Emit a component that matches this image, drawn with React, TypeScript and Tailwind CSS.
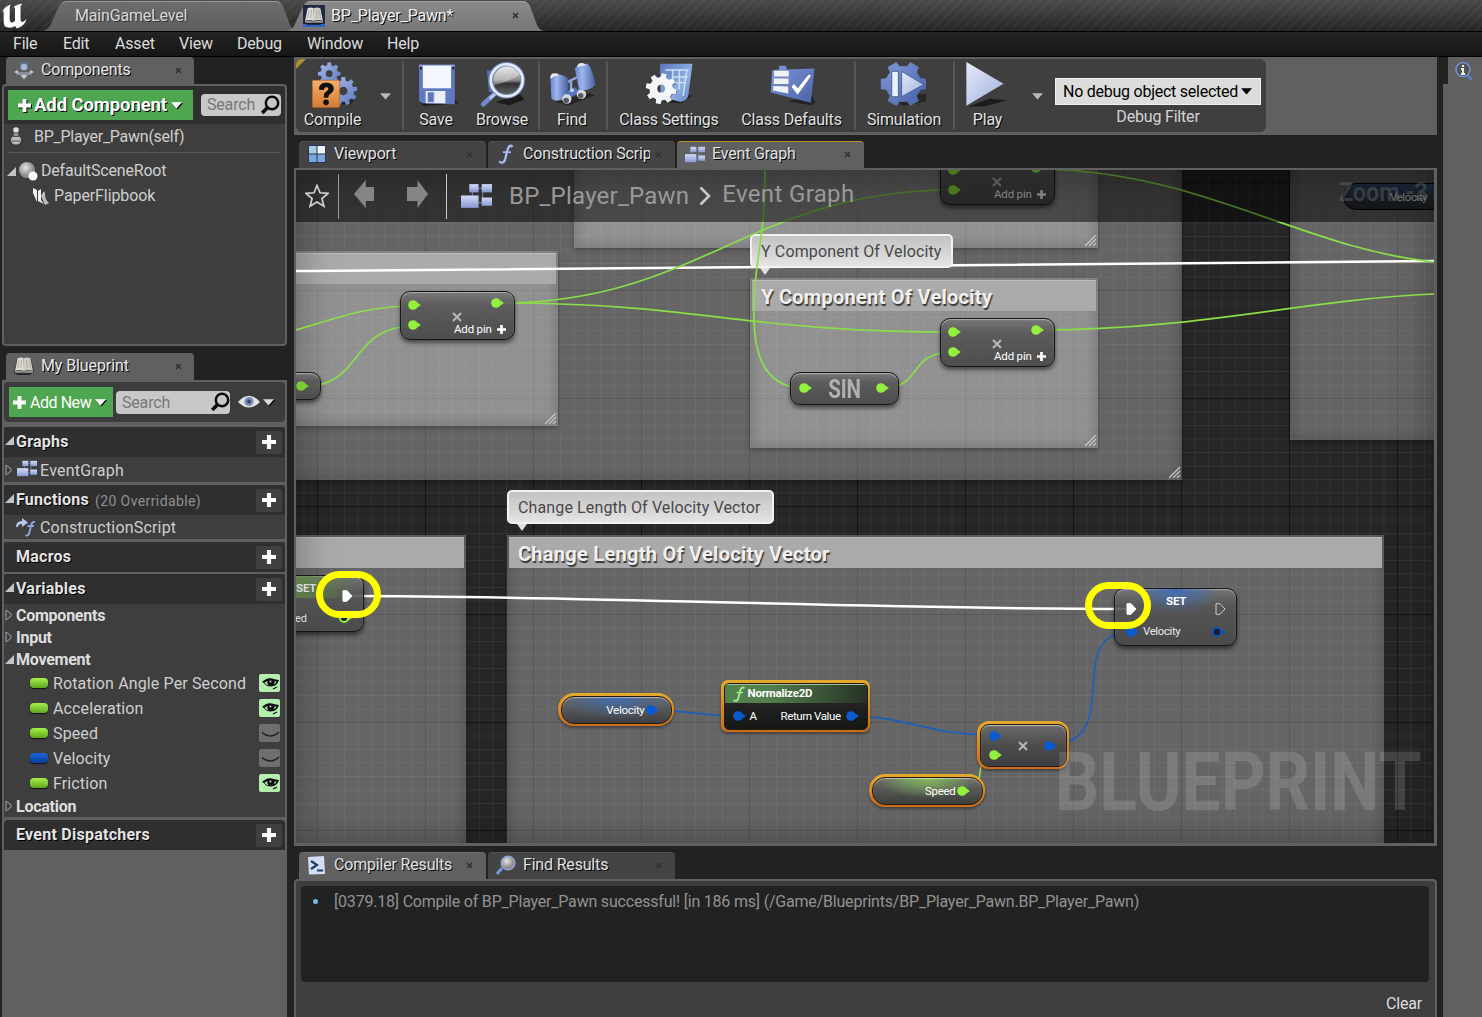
import type { ReactNode } from "react";

const shadow = "[text-shadow:1px_1px_0_#000]";

/* ---------- small shared glyphs ---------- */

function CloseX({ className = "" }: { className?: string }) {
  return (
    <svg width="7" height="7" viewBox="0 0 7 7" className={className}>
      <path d="M1 1L6 6M6 1L1 6" stroke="#333" strokeWidth="1.7" />
    </svg>
  );
}

function Plus({ size = 13, color = "#fff" }: { size?: number; color?: string }) {
  return (
    <svg width={size} height={size} viewBox="0 0 13 13" className="shrink-0">
      <path d="M4.6 0h3.8v4.6H13v3.8H8.4V13H4.6V8.4H0V4.6h4.6z" fill={color} />
    </svg>
  );
}

function Caret({ color = "#fff", className = "" }: { color?: string; className?: string }) {
  return (
    <svg width="11" height="7" viewBox="0 0 11 7" className={`shrink-0 ${className}`}>
      <path d="M0 .3h11L5.5 6.6z" fill={color} />
    </svg>
  );
}

function Magnifier({ size = 20 }: { size?: number }) {
  return (
    <svg width={size} height={size} viewBox="0 0 20 20" fill="none" className="shrink-0">
      <circle cx="12" cy="8" r="6.2" stroke="#0a0a0a" strokeWidth="2.5" />
      <path d="M7.4 12.8L2.2 18" stroke="#0a0a0a" strokeWidth="3.6" />
    </svg>
  );
}

function OpenTri() {
  return (
    <svg width="9" height="9" viewBox="0 0 9 9" className="shrink-0">
      <path d="M9 0v9H0z" fill="#c4c4c4" />
    </svg>
  );
}

function ClosedTri() {
  return (
    <svg width="7" height="12" viewBox="0 0 7 12" fill="none" className="shrink-0">
      <path d="M1 1v10L6 7.2V4.8z" stroke="#a4a4a4" />
    </svg>
  );
}

function GraphIcon({ w = 20, h = 17 }: { w?: number; h?: number }) {
  return (
    <svg width={w} height={h} viewBox="0 0 30 25" className="shrink-0">
      <defs>
        <linearGradient id="gi" x1="0" y1="0" x2="0" y2="1">
          <stop offset="0" stopColor="#d3dcf8" />
          <stop offset="1" stopColor="#8798d2" />
        </linearGradient>
      </defs>
      <path d="M11 14V5h10v14H14" stroke="#7686b5" fill="none" />
      <rect x="8" y="1" width="9" height="8" fill="url(#gi)" />
      <rect x="20" y="1" width="10" height="8" fill="url(#gi)" />
      <rect x="0" y="12" width="17" height="12" fill="url(#gi)" />
      <rect x="20" y="14" width="10" height="8" fill="url(#gi)" />
    </svg>
  );
}

function BookIcon({ boxed = false }: { boxed?: boolean }) {
  return (
    <svg width="22" height="22" viewBox="0 0 22 22" className="shrink-0">
      {boxed && <rect width="22" height="22" fill="#1e2a44" />}
      {boxed && <rect y="19" width="22" height="3" fill="#2f66c4" />}
      <path d="M1 18L4 4h14l3 13-4 3H5z" fill="#111" opacity=".7" />
      <path d="M2 16L4.5 3.5Q8 1.5 10.7 3.3L11 16Q6 14 2 16z" fill="#e0ddd6" />
      <path d="M20 16L17.5 3.5Q14 1.5 10.9 3.3L11 16Q16 14 20 16z" fill="#cfccc5" />
      <path d="M6 5.5L4.5 13M8.5 5L7.7 13M13.5 5l.8 8M16 5.5l1.5 7.5" stroke="#b0ada6" />
      <path d="M2 16.3Q6 14.5 11 16.5 16 14.5 20 16.3v1.5H2z" fill="#9c9a94" />
    </svg>
  );
}

function FnIcon({ size = 20, color = "#a8b9f0" }: { size?: number; color?: string }) {
  return (
    <svg width={size} height={size} viewBox="0 0 20 20" fill="none" className="shrink-0">
      <path d="M16.5 3Q15 .6 13 2.6 11.8 4 11 8L9.2 15Q8.2 18.8 5.6 18.6 4 18.5 3.5 17.3" stroke={color} strokeWidth="2.4" />
      <path d="M7 8.2h8" stroke={color} strokeWidth="1.8" />
    </svg>
  );
}

/* ---------- title bar ---------- */

function UnrealLogo() {
  return (
    <svg width="28" height="28" viewBox="0 0 28 28" className="mt-0.5">
      <path
        d="M1 12Q4 4 11 2.5 9.5 4 9.7 6.500V18q.5 3 2.600 2.500 1.600-.4 2.700-1.700V6.500Q14.800 5 13.300 5.200 17 2 22.500 1.500 20.500 3.500 20.500 5.500V17.500q.2 2.600 2 2.400 2.200-.5 4.200-3.400Q25 24 16.800 26.500L15 24Q11.500 26.800 6 25 3.500 24 3.700 19V11q0-2.300-1-1.800Q1.700 9.900 1 12z"
        fill="#fff"
      />
    </svg>
  );
}

function TitleTab({ className, fill, children }: { className: string; fill: string; children: ReactNode }) {
  return (
    <div className={`relative flex h-[31px] shrink-0 items-center ${className}`}>
      <svg className="absolute inset-0 h-full w-full" viewBox="0 0 256 31" preserveAspectRatio="none">
        <defs>
          <linearGradient id={fill} x1="0" y1="0" x2="0" y2="1">
            <stop offset="0" stopColor={fill === "tabOn" ? "#8a8a8a" : "#6d6d6d"} />
            <stop offset="1" stopColor={fill === "tabOn" ? "#777" : "#5e5e5e"} />
          </linearGradient>
        </defs>
        <path d="M0 31Q6 29 8 24L16 6Q19 1 24 1H234Q240 1 242 6L249 25Q251 30 256 31z" fill={`url(#${fill})`} />
        <path d="M20 2.500Q22 1.500 24 1.500H234Q237 1.500 239 3" fill="none" stroke="#a5a5a5" strokeWidth=".8" />
      </svg>
      <div className="relative flex h-full w-full items-center">{children}</div>
    </div>
  );
}

function TitleBar() {
  return (
    <header className="flex h-[31px] bg-[repeating-linear-gradient(135deg,rgba(255,255,255,0.03)_0_2px,transparent_2px_7px),linear-gradient(to_bottom,#4a4a4a,#262626)]">
      <div className="w-[43px]">
        <UnrealLogo />
      </div>
      <TitleTab className="w-[254px]" fill="tabOff">
        <span className="ml-8 text-base text-[#d8d8d8] [text-shadow:1px_1px_0_#333]">MainGameLevel</span>
      </TitleTab>
      <TitleTab className="-ml-2.5 w-[257px]" fill="tabOn">
        <span className="ml-4">
          <BookIcon boxed />
        </span>
        <span className={`ml-1.5 text-base text-[#f2f2f2] ${shadow}`}>BP_Player_Pawn*</span>
        <CloseX className="mr-[25px] ml-auto" />
      </TitleTab>
    </header>
  );
}

function MenuBar() {
  return (
    <nav className="flex h-[26px] items-center border-y border-black bg-gradient-to-b from-[#242424] to-[#161616] pl-[13px] text-base text-[#dcdcdc]">
      <span className="w-[50px]">File</span>
      <span className="w-[52px]">Edit</span>
      <span className="w-16">Asset</span>
      <span className="w-[58px]">View</span>
      <span className="w-[70px]">Debug</span>
      <span className="w-20">Window</span>
      <span>Help</span>
    </nav>
  );
}

/* ---------- left panels ---------- */

function ComponentsPanel() {
  return (
    <section className="flex h-[289px] flex-col">
      <div className="ml-1 flex h-[27px] w-[188px] items-center rounded-t-sm bg-[#606060] pb-px pl-2">
        <svg width="20" height="20" viewBox="0 0 20 20">
          <path d="M10 20L6 15H2l2-3h12l2 3h-4z" fill="#8a8f9a" />
          <rect x="6" y="2" width="8" height="8" fill="#5a6f96" />
          <circle cx="10" cy="7" r="3.300" fill="#a9b7d6" />
          <path d="M0 12l4-2v4zM20 12l-4-2v4zM10 19l-3-4h6z" fill="#c5cad4" />
        </svg>
        <span className={`ml-[7px] text-base text-[#e8e8e8] ${shadow}`}>Components</span>
        <CloseX className="mr-3 ml-auto" />
      </div>
      <div className="flex flex-1 flex-col rounded-sm border-2 border-[#606060] bg-[#3e3e3e]">
        <div className="flex h-[38px] items-center rounded-t bg-[#2f2f2f] pr-1 pl-1">
          <div className="flex h-[30px] w-[185px] items-center bg-[#4fa650] pl-2.5">
            <span className="drop-shadow-[1px_1px_0_#000]">
              <Plus size={13} />
            </span>
            <span className={`ml-[3px] pt-0.5 text-[18.500px] font-bold tracking-[-0.1px] text-white ${shadow}`}>Add Component</span>
            <Caret className="ml-1 drop-shadow-[1px_1px_0_#000]" />
          </div>
          <div className="ml-auto flex h-[22px] w-[80px] items-center justify-between rounded-sm bg-[#c8c8c8] pr-px pl-1.5">
            <span className="text-base text-[#777]">Search</span>
            <Magnifier />
          </div>
        </div>
        <div className="mx-1 flex h-[29px] items-center border-b border-[#585858] pl-0.5 text-base text-[#cfcfcf]">
          <svg width="12" height="18" viewBox="0 0 12 18" className="-mt-1">
            <circle cx="6" cy="3" r="2.800" fill="#ddd" />
            <circle cx="6" cy="7.500" r="2.500" fill="#888" />
            <ellipse cx="6" cy="13" rx="5" ry="4.500" fill="#bbb" />
            <path d="M2 9.500h8M2 14h8" stroke="#555" />
          </svg>
          <span className="-mt-0.5 ml-[12px] tracking-[-0.26px]">BP_Player_Pawn(self)</span>
        </div>
        <div className="mt-[6px] flex h-6 items-center pl-[3px] text-base text-[#cfcfcf]">
          <OpenTri />
          <svg width="20" height="20" viewBox="0 0 20 20" className="ml-0.5">
            <defs>
              <radialGradient id="ball" cx=".4" cy=".35">
                <stop offset="0" stopColor="#e6e6e6" />
                <stop offset="1" stopColor="#8c8c8c" />
              </radialGradient>
            </defs>
            <circle cx="9" cy="9" r="8" fill="url(#ball)" />
            <circle cx="15" cy="15" r="4.500" fill="#fff" />
          </svg>
          <span className="ml-[3px]">DefaultSceneRoot</span>
        </div>
        <div className="flex h-[26px] items-center pl-7 text-base text-[#cfcfcf]">
          <svg width="17" height="18" viewBox="0 0 17 18">
            <path d="M1 1l4 2v12L1 6zM6 4l3-2v11l3 4-6-3z" fill="#f2f2f2" />
            <path d="M9 9q4-8 4-2t4 9l-4 2z" fill="#bdbdbd" />
          </svg>
          <span className="ml-[5px] tracking-[-0.1px]">PaperFlipbook</span>
        </div>
      </div>
    </section>
  );
}

function SectionHeader({ title, note, arrow = true }: { title: string; note?: string; arrow?: boolean }) {
  return (
    <div className="flex h-[30px] items-center rounded-t bg-[#2f2f2f] pr-[3px] pl-px">
      <span className="w-[11px] pb-1">{arrow && <OpenTri />}</span>
      <span className={`text-base font-bold tracking-[0.25px] text-[#e4e4e4] ${shadow}`}>{title}</span>
      {note && <span className="ml-1.5 pt-0.5 text-sm tracking-[0.4px] text-[#8f8f8f]">{note}</span>}
      <span className="ml-auto flex h-[23px] w-[26px] items-center justify-center rounded-xs bg-[#404040] pr-px">
        <Plus size={14} />
      </span>
    </div>
  );
}

function Category({ name, open = false }: { name: string; open?: boolean }) {
  return (
    <div className="flex h-[22px] items-center pl-px text-base font-bold tracking-[-0.25px] text-[#dedede]">
      <span className="flex w-[11px] items-center">{open ? <OpenTri /> : <ClosedTri />}</span>
      <span className="pt-px">{name}</span>
    </div>
  );
}

function Variable({ name, blue = false, shown = false }: { name: string; blue?: boolean; shown?: boolean }) {
  return (
    <div className="flex h-[25px] items-center pt-px pr-[5px] pl-[26px]">
      <span
        className={
          blue
            ? "h-2.5 w-[18px] rounded-[4px] bg-gradient-to-b from-[#1a63d8] to-[#0a3f9c] shadow-[0_1px_1px_#111]"
            : "h-2.5 w-[18px] rounded-[4px] bg-gradient-to-b from-[#a6f04a] to-[#5fa81e] shadow-[0_1px_1px_#111]"
        }
      />
      <span className="ml-[5px] pt-0.5 text-base tracking-[0.13px] text-[#cfcfcf]">{name}</span>
      {shown ? (
        <svg width="21" height="18" viewBox="0 0 21 18" className="ml-auto rounded-xs bg-[#b5efb0]">
          <path d="M3 8Q8 3 13 4.500 17 5.500 20 6 18 12 12 12.500 7 12.500 5 9z" fill="#0a0a0a" />
          <path d="M5.500 8.800Q8 11.500 9.500 11.300 7.500 9 8.500 7.200 7 7.500 5.500 8.800zM15.500 7.500q.5 1.500-1 3 2.500-1 3-3z" fill="#b5efb0" />
          <circle cx="11.500" cy="7.500" r="1" fill="#b5efb0" />
          <path d="M14 15l4-2" stroke="#0a0a0a" strokeWidth="1.200" />
        </svg>
      ) : (
        <svg width="21" height="18" viewBox="0 0 21 18" fill="none" className="ml-auto rounded-xs bg-[#6f6f6f]">
          <path d="M3 8.500Q6 11.500 11 12 16 12 20 8" stroke="#222" strokeWidth="1.700" />
        </svg>
      )}
    </div>
  );
}

function MyBlueprintPanel() {
  return (
    <section className="mt-[7px] flex flex-1 flex-col">
      <div className="ml-1 flex h-[27px] w-[188px] items-center rounded-t-sm bg-[#606060] pb-px pl-[7px]">
        <BookIcon />
        <span className={`ml-1.5 text-base tracking-[-0.1px] text-[#e8e8e8] ${shadow}`}>My Blueprint</span>
        <CloseX className="mr-3 ml-auto" />
      </div>
      <div className="flex flex-1 flex-col border-x-2 border-t-2 border-[#606060] bg-[#606060]">
        <div className="flex h-10 items-center rounded bg-[#3c3c3c] pl-[5px]">
          <div className="flex h-[30px] w-[104px] items-center bg-[#4fa650] pl-1">
            <Plus size={13} />
            <span className="ml-1 pt-px text-base tracking-[-0.45px] text-white">Add New</span>
            <Caret className="ml-1 drop-shadow-[1px_1px_0_#000]" />
          </div>
          <div className="ml-[3px] flex h-[23px] w-[114px] items-center justify-between rounded-sm bg-[#c8c8c8] pl-1.5">
            <span className="pt-px text-base text-[#777]">Search</span>
            <Magnifier />
          </div>
          <svg width="22" height="14" viewBox="0 0 22 14" className="ml-2">
            <path d="M0 7Q11-5.500 22 7 11 18 0 7z" fill="#e3e3e6" />
            <circle cx="11" cy="6.500" r="4.500" fill="#7b8db5" />
            <circle cx="11" cy="6.500" r="2" fill="#39466a" />
          </svg>
          <Caret className="ml-[3px] drop-shadow-[1px_1px_0_#000]" color="#dcdcdc" />
        </div>
        <div className="mt-[5px] bg-[#3e3e3e]">
          <SectionHeader title="Graphs" />
          <div className="flex h-[25px] items-center pl-px text-base tracking-[0.25px] text-[#cfcfcf]">
            <ClosedTri />
            <span className="mr-[3px] ml-[5px] pb-0.5">
              <GraphIcon />
            </span>
            <span className="pt-0.5">EventGraph</span>
          </div>
        </div>
        <div className="mt-[3px] bg-[#3e3e3e]">
          <SectionHeader title="Functions" note="(20 Overridable)" />
          <div className="flex h-6 items-center pl-3 text-base tracking-[0.18px] text-[#cfcfcf]">
            <svg width="20" height="20" viewBox="0 0 20 20" fill="none" className="mr-1">
              <path d="M0 10Q0 4 6 4V1l6 4.500L6 10V7Q2 7 2 10z" fill="#b7c6ee" />
              <path d="M19 5q-3-1-4 4l-1.500 6Q12.800 19 9.500 18.500M11.500 9H18" stroke="#8ea6e4" strokeWidth="1.800" />
            </svg>
            <span className="pt-0.5">ConstructionScript</span>
          </div>
        </div>
        <div className="mt-[3px] bg-[#3e3e3e]">
          <SectionHeader title="Macros" arrow={false} />
        </div>
        <div className="mt-[2px] bg-[#3e3e3e]">
          <SectionHeader title="Variables" />
          <Category name="Components" />
          <Category name="Input" />
          <Category name="Movement" open />
          <Variable name="Rotation Angle Per Second" shown />
          <Variable name="Acceleration" shown />
          <Variable name="Speed" />
          <Variable name="Velocity" blue />
          <Variable name="Friction" shown />
          <Category name="Location" />
        </div>
        <div className="mt-[3px]">
          <SectionHeader title="Event Dispatchers" arrow={false} />
        </div>
      </div>
    </section>
  );
}

/* ---------- toolbar ---------- */

function gearPath(cx: number, cy: number, r: number, teeth: number, turn = 0, hole = 0.3) {
  let d = "";
  for (let i = 0; i < teeth; i++) {
    const a = (i / teeth) * Math.PI * 2 + turn;
    const s = Math.PI / teeth;
    [
      [a - s * 0.62, r * 0.76],
      [a - s * 0.4, r],
      [a + s * 0.4, r],
      [a + s * 0.62, r * 0.76],
    ].forEach(([t, q], k) => {
      d += `${i === 0 && k === 0 ? "M" : "L"}${(cx + Math.sin(t) * q).toFixed(1)} ${(cy - Math.cos(t) * q).toFixed(1)}`;
    });
  }
  const h = r * hole;
  return hole === 0 ? `${d}z` : `${d}zM${cx - h} ${cy}a${h} ${h} 0 1 0 ${h * 2} 0a${h} ${h} 0 1 0 ${-h * 2} 0z`;
}

function Defs() {
  return (
    <svg width="0" height="0" className="absolute">
      <defs>
        <linearGradient id="blue" x1="0" y1="0" x2="1" y2="1">
          <stop offset="0" stopColor="#a9bbe9" />
          <stop offset="1" stopColor="#5c78bd" />
        </linearGradient>
        <linearGradient id="deep" x1="0" y1="0" x2="1" y2="1">
          <stop offset="0" stopColor="#7f97d6" />
          <stop offset="1" stopColor="#4963a8" />
        </linearGradient>
        <linearGradient id="sheet" x1="0" y1="0" x2="1" y2="1">
          <stop offset="0" stopColor="#5a79bd" />
          <stop offset=".6" stopColor="#8fb1e4" />
          <stop offset="1" stopColor="#5f7fc4" />
        </linearGradient>
        <linearGradient id="barrel" x1="0" y1="0" x2="1" y2="0">
          <stop offset="0" stopColor="#6484cd" />
          <stop offset=".35" stopColor="#9fb6ec" />
          <stop offset="1" stopColor="#4460a4" />
        </linearGradient>
        <linearGradient id="pale" x1="0" y1="0" x2="1" y2="1">
          <stop offset="0" stopColor="#e6ebfb" />
          <stop offset="1" stopColor="#9fb0dc" />
        </linearGradient>
        <linearGradient id="lens" x1="0" y1="0" x2="0" y2="1">
          <stop offset="0" stopColor="#e8e8e8" />
          <stop offset=".5" stopColor="#8a8a8a" />
          <stop offset=".6" stopColor="#333" />
          <stop offset="1" stopColor="#666" />
        </linearGradient>
        <linearGradient id="orange" x1="0" y1="0" x2="0" y2="1">
          <stop offset="0" stopColor="#f6ae6c" />
          <stop offset="1" stopColor="#d37b33" />
        </linearGradient>
      </defs>
    </svg>
  );
}

function Icon48({ children }: { children: ReactNode }) {
  return (
    <svg width="50" height="50" viewBox="0 0 50 50" fill="none">
      {children}
    </svg>
  );
}

const CompileIcon = () => (
  <Icon48>
    <path d="M30 44l18-3-4 5H32z" fill="#111" opacity=".6" />
    <path d={gearPath(21, 13.500, 12, 8)} fill="url(#blue)" fillRule="evenodd" />
    <path d={gearPath(36, 32, 15, 9)} fill="url(#blue)" fillRule="evenodd" />
    <rect x="3" y="20.500" width="29" height="29" rx="1" fill="url(#orange)" stroke="#a85f22" strokeWidth=".6" />
    <path d="M10.500 30Q10.500 23.500 17.800 23.500 25.300 23.500 25.300 29.500 25.300 33 21.500 35 19.600 36 19.600 38.500h-4Q15.200 34.500 18 32.800 20.600 31.300 20.600 29.600 20.600 27.300 18 27.300 15.300 27.300 15 30.400z" fill="#111" stroke="#111" />
    <circle cx="17.600" cy="44" r="3" fill="#111" />
  </Icon48>
);

const SaveIcon = () => (
  <Icon48>
    <path d="M8 44L44 40 49 45 12 48z" fill="#0d0d0d" opacity=".65" />
    <path d="M7 4h38v42l-35-1-3-3z" fill="#5f7ac2" />
    <path d="M7 4h38v2H7z" fill="#93a8e0" />
    <rect x="11" y="5" width="30" height="24" fill="#f3f6fc" />
    <rect x="8" y="6" width="2" height="3" fill="#223" />
    <rect x="42.500" y="6" width="2" height="3" fill="#223" />
    <path d="M14 32h21v13H14z" fill="#e9eefa" />
    <path d="M16 33h7v11h-7z" fill="#5a75be" stroke="#ccd" />
  </Icon48>
);

const BrowseIcon = () => (
  <Icon48>
    <path d="M9 10h36v23H11z" fill="#5570b5" />
    <path d="M18 44l26-9 5 6-16 6z" fill="#0d0d0d" opacity=".7" />
    <path d="M18 34L5 46" stroke="#6f89cd" strokeWidth="5" strokeLinecap="round" />
    <path d="M20 33l-8 7" stroke="#b8c6ee" strokeWidth="3" />
    <circle cx="30" cy="20.500" r="17" fill="url(#lens)" stroke="#6f86c0" strokeWidth="5" />
    <circle cx="30" cy="20.500" r="17" stroke="#e6ecfb" strokeWidth="2.800" />
    <path d="M15.500 26Q27 24 44.500 15 42 6 31 5 16 6 15.500 26z" fill="#fff" opacity=".35" />
  </Icon48>
);

const FindIcon = () => (
  <Icon48>
    <path d="M8 43l36-9 5 3-28 10z" fill="#0d0d0d" opacity=".55" />
    <path d="M18 33l10-5 6 5-14 8z" fill="#5876bd" />
    <path d="M19 23l12-6M24 20v12" stroke="#8fa6dd" strokeWidth="2.600" />
    <path d="M2 18Q8 13 14 15l5 2q2 1 2 4v16q-5 5-12 5-5 0-6-3z" fill="url(#barrel)" />
    <path d="M28 8l4-4 10-1q5 7 8 22-4 5-11 6-6 0-7-3z" fill="url(#barrel)" />
    <path d="M2 19q-1-6 5-6 4 0 4 2.500-4 0-9 3.500z" fill="#ececee" />
    <path d="M30.500 7q0-5 4.500-5 4 0 4.500 2.500Q34 4.500 30.500 7z" fill="#ececee" />
    <path d="M17 35l6 1-2 4-5 1zM32 29l6 1-1 5-5 1z" fill="#7c97da" />
    <circle cx="19.500" cy="40.500" r="5" fill="#d6d7db" />
    <circle cx="18.800" cy="42" r="3" fill="#565b66" />
    <circle cx="35" cy="35.500" r="5" fill="#d6d7db" />
    <circle cx="34.300" cy="37" r="3" fill="#565b66" />
    <circle cx="25" cy="31" r="2" fill="#c3d0f2" />
  </Icon48>
);

const SettingsIcon = () => (
  <Icon48>
    <path d="M20 44l24-8 6 1-11 8z" fill="#0d0d0d" opacity=".6" />
    <path d="M15.500 3H50l-4.500 34q-1 5-8 6.500L16 38z" fill="url(#sheet)" />
    <path d="M21 9.500h25M28 17h17M30 23h13M29 9v14M36 9v21M44 9l-4 28" stroke="#cfe0f8" strokeWidth="1.500" />
    <path d={gearPath(17.500, 30.500, 16.500, 8, 0.2)} fill="#1a1a1a" opacity=".35" fillRule="evenodd" />
    <path d={gearPath(16.700, 29.500, 16.500, 8, 0.2, 0.25)} fill="#f5f6fa" fillRule="evenodd" />
  </Icon48>
);

const DefaultsIcon = () => (
  <Icon48>
    <path d="M20 43l26-6 4 7-4 3z" fill="#0d0d0d" opacity=".55" />
    <path d="M4 9.500l7-.2.600-4.300h7l1 4L49 8 45 44.500 2.300 33.500z" fill="url(#deep)" />
    <path d="M6 10.500h15.500v6H6zM5.500 18.500h15.800v6H5.500zM5 26.500l16 .5v7.500l-16-3z" fill="#f1f3fa" />
    <path d="M24.500 27.500l2.600-3 4 4.500L42.500 14.500l3 .8L31 36z" fill="#fff" />
  </Icon48>
);

const SimulationIcon = () => (
  <Icon48>
    <path d="M18 44l24-9h7l-1 8-24 5z" fill="#0d0d0d" opacity=".5" />
    <path d={gearPath(24.300, 24.500, 24, 6, Math.PI / 6, 0)} fill="url(#deep)" stroke="url(#deep)" strokeLinejoin="round" />
    <circle cx="24.300" cy="24.500" r="19" fill="url(#deep)" />
    <path d="M12 11h7v27h-7z" fill="#edf0fa" stroke="#3f568f" strokeWidth=".9" />
    <path d="M22.500 11v27L46 25z" fill="url(#pale)" stroke="#3f568f" strokeWidth=".9" />
  </Icon48>
);

const PlayIcon = () => (
  <Icon48>
    <path d="M3 49l24-9 18 2-22 6z" fill="#0d0d0d" opacity=".7" />
    <path d="M2 1L41.500 24.300 2 47.500z" fill="url(#pale)" />
  </Icon48>
);

function Tool({ label, className, children }: { label: string; className: string; children: ReactNode }) {
  return (
    <div className={`flex shrink-0 flex-col items-center pt-0.5 ${className}`}>
      {children}
      <span className={`text-base leading-6 whitespace-nowrap text-[#e2e2e2] ${shadow}`}>{label}</span>
    </div>
  );
}

const Sep = () => <span className="my-0.5 w-0.5 shrink-0 self-stretch rounded bg-[#555]" />;

function Toolbar() {
  return (
    <section className="h-[78px] bg-[#606060] pt-0.5 pl-0.5">
      <div className="relative flex h-[73px] w-[970px] overflow-hidden rounded-md bg-[#3f3f3f] text-[#bbb]">
        <span className="absolute top-0 left-0 h-2.5 w-2.5 bg-[#b08f2c] [clip-path:polygon(0_0,100%_0,0_100%)]" />
        <Tool label="Compile" className="w-[73px]">
          <CompileIcon />
        </Tool>
        <Caret className="mt-[34px] mr-[11px] ml-[11px]" color="#b8b8b8" />
        <Sep />
        <Tool label="Save" className="w-[64px]">
          <SaveIcon />
        </Tool>
        <Tool label="Browse" className="w-[68px]">
          <BrowseIcon />
        </Tool>
        <span className="w-0.5" />
        <Sep />
        <Tool label="Find" className="w-[64px]">
          <FindIcon />
        </Tool>
        <span className="w-0.5" />
        <Sep />
        <Tool label="Class Settings" className="w-[122px]">
          <SettingsIcon />
        </Tool>
        <Tool label="Class Defaults" className="w-[123px]">
          <DefaultsIcon />
        </Tool>
        <span className="w-px" />
        <Sep />
        <Tool label="Simulation" className="w-[96px]">
          <SimulationIcon />
        </Tool>
        <span className="w-px" />
        <Sep />
        <Tool label="Play" className="w-[65px]">
          <PlayIcon />
        </Tool>
        <Caret className="mt-[34px] ml-3" color="#b8b8b8" />
        <div className="ml-[12px] pt-[19px]">
          <div className="flex h-[27px] w-[206px] items-center border border-[#f0f0f0] bg-[#dcdcdc] pl-[7px] text-base text-black">
            <span className="w-[176px] tracking-[-0.25px] whitespace-nowrap">No debug object selected</span>
            <Caret color="#000" className="ml-0.5" />
          </div>
          <div className="text-center text-base leading-6 text-[#d4d4d4]">Debug Filter</div>
        </div>
      </div>
    </section>
  );
}

/* ---------- document tabs ---------- */

function Tab({ icon, label, active = false, marked = false }: { icon: ReactNode; label: string; active?: boolean; marked?: boolean }) {
  return (
    <div
      className={`flex h-[27px] w-[187px] items-center rounded-t-sm border-t pr-[13px] pb-0.5 pl-[7px] ${active ? "bg-[#606060]" : "bg-[#444]"} ${marked ? "border-[#b8962e]" : active ? "border-[#6c6c6c]" : "border-[#505050]"}`}
    >
      <span className="flex w-[21px] justify-center">{icon}</span>
      <span className={`ml-[7px] w-[127px] overflow-hidden text-base whitespace-nowrap text-[#e2e2e2] ${shadow}`}>{label}</span>
      <CloseX className="ml-auto shrink-0" />
    </div>
  );
}

/* ---------- graph canvas ---------- */

function Pin({ at, color = "#93f03e", hollow = false }: { at: string; color?: string; hollow?: boolean }) {
  return (
    <svg width="16" height="12" viewBox="0 0 16 12" className={`absolute ${at}`}>
      <circle cx="6" cy="6" r={hollow ? 4 : 4.800} fill={hollow ? "#151b24" : color} stroke={hollow ? color : "none"} strokeWidth="2" />
      <path d="M10.200 3.300l3.600 2.700-3.600 2.700z" fill={color} />
    </svg>
  );
}

function Exec({ at, hollow = false }: { at: string; hollow?: boolean }) {
  return (
    <svg width="11" height="12" viewBox="0 0 11 12" className={`absolute ${at}`}>
      <path d="M1 .7h4L10 6 5 11.300H1z" fill={hollow ? "none" : "#fff"} stroke={hollow ? "#ccc" : "#fff"} strokeLinejoin="round" />
    </svg>
  );
}

const nodeSkin =
  "absolute rounded-[10px] border-[1.5px] border-[#161616] bg-[linear-gradient(to_bottom,rgba(118,118,118,.92),rgba(84,84,84,.88)_30%,rgba(72,72,72,.92))] shadow-[0_3px_4px_rgba(0,0,0,.5),inset_0_1px_1px_rgba(220,220,220,.55)]";
const ringSkin = "absolute bg-gradient-to-b from-[#e4ab2c] to-[#cc6a16] p-[2.5px] shadow-[0_2px_3px_rgba(0,0,0,.35)]";

function MultiplyNode({ at }: { at: string }) {
  return (
    <div className={`${nodeSkin} h-[49px] w-[115px] ${at}`}>
      <Pin at="left-[6px] top-[7px]" />
      <Pin at="left-[6px] top-[27px]" />
      <Pin at="left-[89px] top-[5px]" />
      <svg width="10" height="10" viewBox="0 0 10 10" className="absolute top-5 left-[51px]">
        <path d="M1 1l8 8M9 1L1 9" stroke="#b4b4b4" strokeWidth="2.200" />
      </svg>
      <span className="absolute top-[29px] left-[53px] text-[11.500px] leading-4 whitespace-nowrap text-white">Add pin</span>
      <span className="absolute top-[33px] left-[96px]">
        <Plus size={9} />
      </span>
    </div>
  );
}

function Grip({ at }: { at: string }) {
  return (
    <svg width="12" height="12" viewBox="0 0 12 12" className={`absolute ${at}`}>
      <path d="M0 11L11 0M4 11l7-7M8 11l3-3" stroke="#c6c6c6" strokeWidth="1.300" />
    </svg>
  );
}

function Comment({ at, title, header = false, grip = true }: { at: string; title?: string; header?: boolean; grip?: boolean }) {
  return (
    <div className={`absolute border border-black/10 bg-white/29 shadow-[inset_0_0_14px_rgba(0,0,0,.22),0_2px_5px_rgba(0,0,0,.3)] ${at}`}>
      {header && (
        <div className="mx-px mt-px flex h-[31px] items-center border-t border-[#bcbcbc] bg-[#aaa] pt-px pl-[9px]">
          <span className="text-xl font-bold tracking-[0.27px] whitespace-nowrap text-[#f0f0f0] [text-shadow:1px_2px_1px_#333]">{title}</span>
        </div>
      )}
      {grip && <Grip at="right-0 bottom-0" />}
    </div>
  );
}

function Bubble({ at, text }: { at: string; text: string }) {
  return (
    <div className={`absolute ${at}`}>
      <div className="flex h-[34px] items-center rounded-[5px] border-2 border-[#f2f2f2] bg-gradient-to-b from-[#c2c2c2] to-[#e4e4e4] pt-px pl-[9px] text-base tracking-[0.13px] whitespace-nowrap text-[#484848]">
        {text}
      </div>
      <div className="ml-2.5 h-[7px] w-2.5 bg-[#e0e0e0] [clip-path:polygon(0_0,100%_0,50%_100%)]" />
    </div>
  );
}

function Pill({ at, label, tint, pin }: { at: string; label: string; tint: string; pin: string }) {
  return (
    <div className={`${ringSkin} h-[33px] w-[116px] rounded-[16px] ${at}`}>
      <div className={`relative h-full rounded-[13px] border border-[#241a10] shadow-[inset_0_1px_1px_rgba(255,255,255,.5)] ${tint}`}>
        <span className="absolute top-[5px] right-[26px] text-[11.500px] leading-4 tracking-[-0.3px] text-white">{label}</span>
        <Pin at="left-[83px] top-[7px]" color={pin} />
      </div>
    </div>
  );
}

function Wires() {
  return (
    <svg width="1482" height="1017" className="absolute top-0 left-0" fill="none">
      <g stroke="#8ade4a" strokeWidth="1.700">
        <path d="M296 330C340 317 368 306 414 306" />
        <path d="M307 386C362 386 350 326 414 326" />
        <path d="M500 303C700 303 750 190 954 190" />
        <path d="M500 303C700 303 740 332 954 332" />
        <path d="M765 170C766 240 753 260 754 320C755 370 775 388 804 388" />
        <path d="M882 388C925 388 905 352 954 352" />
        <path d="M1037 330C1200 330 1300 300 1434 294" />
        <path d="M1037 169C1200 170 1300 248 1434 262" />
        <path d="M963 791C992 791 969 755 994 755" />
      </g>
      <path d="M346 596C600 596 850 609 1131 609" stroke="#fff" strokeWidth="2.500" />
      <g stroke="#1c60bd" strokeWidth="1.700">
        <path d="M655 710C680 710 705 716 738 716" />
        <path d="M851 716C905 716 930 735 990 735" />
        <path d="M1049 745C1128 745 1060 632 1131 632" />
      </g>
    </svg>
  );
}

function GraphBar() {
  return (
    <div className="absolute inset-x-0 top-0 flex h-[52px] items-center bg-black/50">
      <svg width="24" height="24" viewBox="0 0 24 24" fill="none" className="ml-[9px]">
        <path d="M12 1.500l3 7.300 8 .6-6.100 5.100 2 7.700L12 18l-6.900 4.200 2-7.700L1 9.400l8-.6z" stroke="#d0d0d0" strokeWidth="1.700" />
      </svg>
      <span className="ml-[9px] h-[45px] w-px bg-[#9a9a9a]" />
      <svg width="20" height="28" viewBox="0 0 22 28" preserveAspectRatio="none" className="mb-1 ml-[15px]">
        <path d="M0 14L13 0v7h9v14h-9v7z" fill="#858585" />
      </svg>
      <svg width="21" height="28" viewBox="0 0 22 28" preserveAspectRatio="none" className="mb-1 ml-[33px]">
        <path d="M22 14L11 0v7H0v14h11v7z" fill="#858585" />
      </svg>
      <span className="ml-[18px] h-[45px] w-px bg-[#c8c8c8]" />
      <span className="ml-3.5">
        <GraphIcon w={31} h={26} />
      </span>
      <span className="ml-[17px] text-[24px] tracking-[0.23px] text-[#999]">BP_Player_Pawn</span>
      <svg width="12" height="20" viewBox="0 0 12 20" fill="none" className="ml-2.5">
        <path d="M1.500 1.500L10 10l-8.500 8.500" stroke="#c8c8c8" strokeWidth="2.600" />
      </svg>
      <span className="-mt-1 ml-[11px] text-[24px] tracking-[0.35px] text-[#999]">Event Graph</span>
    </div>
  );
}

function Graph() {
  return (
    <div className="relative h-[678px] overflow-hidden border-2 border-r-[3px] border-b-[3px] border-[#606060] bg-[#262626] bg-[linear-gradient(to_right,#141414_1px,transparent_1px),linear-gradient(to_bottom,#141414_1px,transparent_1px),linear-gradient(to_right,#323232_1px,transparent_1px),linear-gradient(to_bottom,#323232_1px,transparent_1px)] bg-[size:108px_108px,108px_108px,13.5px_13.5px,13.5px_13.5px] bg-[position:21px_12px,21px_12px,21px_12px,21px_12px]">
      <div className="absolute -top-[170px] -left-[296px] h-[1017px] w-[1482px]">
        <Comment at="left-[200px] top-[100px] w-[982px] h-[380px]" />
        <Comment at="left-[1290px] top-[100px] w-[300px] h-[340px]" />
        <Comment at="left-[574px] top-[100px] w-[524px] h-[148px]" />
        <Comment at="left-[200px] top-[251px] w-[358px] h-[175px]" header />
        <Comment at="left-[750px] top-[278px] w-[348px] h-[170px]" header title="Y Component Of Velocity" />
        <Comment at="left-[200px] top-[535px] w-[266px] h-[400px]" header />
        <Comment at="left-[507px] top-[535px] w-[877px] h-[400px]" header title="Change Length Of Velocity Vector" />

        <div className="absolute top-[170px] left-[296px] h-[673px] w-[1138px] shadow-[inset_0_0_40px_rgba(0,0,0,.35)]" />

        <svg width="1482" height="1017" className="absolute top-0 left-0" fill="none">
          <path d="M296 271C600 270 900 263 1434 261" stroke="#fff" strokeWidth="2.500" />
        </svg>
        <Bubble at="left-[750px] top-[234px] w-[203px]" text="Y Component Of Velocity" />
        <Bubble at="left-[507px] top-[490px] w-[267px]" text="Change Length Of Velocity Vector" />
        <Wires />

        <MultiplyNode at="left-[400px] top-[291px]" />
        <MultiplyNode at="left-[940px] top-[318px]" />
        <MultiplyNode at="left-[940px] top-[156px]" />

        <div className={`${nodeSkin} top-[372px] left-[790px] h-[33px] w-[109px]`}>
          <Pin at="left-[7px] top-[9px]" />
          <span className="absolute inset-x-0 top-[3px] scale-x-[.82] text-center text-[25px] leading-7 font-bold text-[#b0b0b0]">SIN</span>
          <Pin at="left-[84px] top-[9px]" />
        </div>
        <div className={`${nodeSkin} top-[372px] left-[260px] h-[28px] w-[61px]`}>
          <Pin at="left-[34px] top-[7px]" color="#7acb34" />
        </div>

        <div className={`${nodeSkin} top-[575px] left-[240px] h-[57px] w-[124px] overflow-hidden`}>
          <div className="h-[22px] bg-gradient-to-r from-[#5f8446] from-50% to-transparent opacity-80" />
          <span className="absolute top-1.5 left-[55px] text-[11.500px] leading-3 font-bold text-[#d8d8d8]">SET</span>
          <span className="absolute top-[35px] left-[54px] text-[11px] leading-4 text-[#ddd]">ed</span>
          <Exec at="left-[101px] top-[14px]" />
          <Pin at="left-[97px] top-[36px]" hollow />
        </div>

        <div className={`${nodeSkin} top-[588px] left-[1114px] h-[58px] w-[123px] overflow-hidden`}>
          <div className="h-[24px] bg-[radial-gradient(ellipse_45px_24px_at_50%_0,#3f6db8,transparent)]" />
          <span className="absolute top-1.5 left-[51px] text-[11.500px] leading-3 font-bold text-white">SET</span>
          <Exec at="left-[11px] top-[14px]" />
          <Exec at="left-[100px] top-[14px]" hollow />
          <Pin at="left-[10px] top-[37px]" color="#0a5ad0" />
          <span className="absolute top-[34px] left-[28px] text-[11.500px] leading-4 tracking-[-0.4px] text-[#e8e8e8]">Velocity</span>
          <Pin at="left-[96px] top-[37px]" color="#0a4fb8" hollow />
        </div>

        <Pill
          at="left-[558px] top-[693px]"
          label="Velocity"
          pin="#0a5ad0"
          tint="bg-[radial-gradient(ellipse_56px_22px_at_50%_0,#3f69ab,transparent),linear-gradient(#6c6c6c,#3d3f44)]"
        />
        <Pill
          at="left-[869px] top-[774px]"
          label="Speed"
          pin="#93f03e"
          tint="bg-[radial-gradient(ellipse_50px_20px_at_50%_0,#82bd5b,transparent),linear-gradient(#6c6c6c,#3d3f3a)]"
        />

        <div className={`${ringSkin} top-[680px] left-[721px] h-[52px] w-[149px] rounded-[7px]`}>
          <div className="relative h-full overflow-hidden rounded-[5px] border border-[#241a10] bg-gradient-to-b from-[#2b2b2b] to-[#161816]">
            <div className="flex h-[19px] items-center border-t border-[#9fc09a] bg-gradient-to-r from-[#54804e] from-30% to-[#263325] pl-1.5">
              <FnIcon size={16} color="#98f08c" />
              <span className="ml-px text-[11.500px] font-bold tracking-[-0.2px] text-white">Normalize2D</span>
            </div>
            <Pin at="left-[7px] top-[26px]" color="#0a5ad0" />
            <span className="absolute top-6 left-[25px] text-[11.500px] leading-4 text-white">A</span>
            <span className="absolute top-6 left-[56px] text-[11.500px] leading-4 tracking-[-0.4px] whitespace-nowrap text-white">Return Value</span>
            <Pin at="left-[120px] top-[26px]" color="#0a5ad0" />
          </div>
        </div>

        <div className={`${ringSkin} top-[721px] left-[977px] h-[48px] w-[92px] rounded-[12px]`}>
          <div className="relative h-full rounded-[9px] border border-[#241a10] bg-gradient-to-b from-[#6b6b6b] via-[#4c4c4c] to-[#3e3e3e] shadow-[inset_0_1px_1px_rgba(255,255,255,.6)]">
            <Pin at="left-[7px] top-[5px]" color="#0a5ad0" />
            <Pin at="left-[7px] top-[24px]" color="#95f03c" />
            <Pin at="left-[62px] top-[15px]" color="#0a5ad0" />
            <svg width="10" height="10" viewBox="0 0 10 10" className="absolute top-4 left-[37px]">
              <path d="M1 1l8 8M9 1L1 9" stroke="#b4b4b4" strokeWidth="2.200" />
            </svg>
          </div>
        </div>

        <span className="absolute top-[735px] left-[1055px] origin-left scale-x-[.858] text-[81px] leading-[96px] font-bold tracking-normal text-white/14">BLUEPRINT</span>

        <div className="absolute top-[571px] left-[316px] h-[47px] w-[65px] rounded-full border-[7px] border-[#ff0]" />
        <div className="absolute top-[582px] left-[1085px] h-[47px] w-[66px] rounded-full border-[7px] border-[#ff0]" />

        <div className="absolute top-[183px] left-[1343px] h-[27px] w-[140px] rounded-[13px] border border-black bg-gradient-to-b from-[#2d4466] to-[#2a2a2a]">
          <span className="absolute top-[5px] left-[46px] text-[11.500px] leading-4 tracking-[-0.4px] text-[#ddd]">Velocity</span>
        </div>
      </div>
      <GraphBar />
      <span className="absolute top-[6px] right-1.5 origin-right scale-x-[.91] text-[26px] leading-8 font-bold whitespace-nowrap text-[#858585]/30">Zoom -3</span>
    </div>
  );
}

/* ---------- bottom ---------- */

function Results() {
  return (
    <section className="flex h-[138px] flex-col rounded-t-sm border-x-2 border-t-2 border-[#606060] bg-[#3e3e3e] pt-[5px] pr-1.5 pl-[5px]">
      <div className="flex h-24 items-start rounded-sm bg-[#222] pt-1 pl-3">
        <span className="mt-[9px] h-[5px] w-[5px] rounded-full bg-[#72b8e8]" />
        <span className="ml-4 text-base tracking-[-0.2px] text-[#929292]">
          [0379.18] Compile of BP_Player_Pawn successful! [in 186 ms] (/Game/Blueprints/BP_Player_Pawn.BP_Player_Pawn)
        </span>
      </div>
      <span className="mt-2.5 mr-[7px] self-end text-base text-[#dcdcdc]">Clear</span>
    </section>
  );
}

export default function App() {
  return (
    <div className="flex h-[1017px] w-[1482px] flex-col overflow-hidden bg-[#222] font-['Roboto',sans-serif] tracking-[-0.18px]">
      <Defs />
      <TitleBar />
      <MenuBar />
      <div className="flex flex-1">
        <aside className="ml-0.5 flex w-[285px] shrink-0 flex-col">
          <ComponentsPanel />
          <MyBlueprintPanel />
        </aside>
        <main className="ml-[7px] w-[1143px] shrink-0">
          <Toolbar />
          <div className="mt-[6px] flex gap-0.5 pl-[5px]">
            <Tab
              label="Viewport"
              icon={
                <svg width="18" height="18" viewBox="0 0 18 18">
                  <rect width="18" height="18" fill="#24385a" />
                  <path d="M1 1h7.500v7.500H1z" fill="#a9cbe0" />
                  <path d="M9.500 1H17v7.500H9.500z" fill="#eef6fa" />
                  <path d="M1 9.500h7.500V17H1zM9.500 9.500H17V17H9.500z" fill="#7da6d8" />
                </svg>
              }
            />
            <Tab label="Construction Script" icon={<FnIcon />} />
            <Tab label="Event Graph" active marked icon={<GraphIcon />} />
          </div>
          <Graph />
          <div className="mt-[6px] flex gap-0.5 pl-[5px]">
            <Tab
              label="Compiler Results"
              active
              icon={
                <svg width="18" height="20" viewBox="0 0 18 20" fill="none">
                  <path d="M0 2L16 1l1 18-16 .5z" fill="#d3def2" />
                  <path d="M3 6l6 4-6 4M9 15.500h6" stroke="#233a66" strokeWidth="2.200" />
                </svg>
              }
            />
            <Tab
              label="Find Results"
              icon={
                <svg width="20" height="20" viewBox="0 0 20 20" fill="none">
                  <path d="M6 13l-5 6" stroke="#7a92d8" strokeWidth="3" />
                  <circle cx="12" cy="8" r="6.800" fill="url(#ball)" stroke="#8fa0d6" strokeWidth="1.600" />
                </svg>
              }
            />
          </div>
          <Results />
        </main>
        <aside className="ml-[6px] flex flex-1 flex-col">
          <div className="ml-[5px] flex h-[27px] items-center bg-[#606060] pl-1.5">
            <svg width="20" height="20" viewBox="0 0 20 20" fill="none">
              <path d="M13 14l5 5" stroke="#5b7cc8" strokeWidth="3" />
              <circle cx="9" cy="8.500" r="7" fill="#555" stroke="#6f8fd0" strokeWidth="1.600" />
              <path d="M9 4v2M7 8h2v5M7 13h4" stroke="#eee" strokeWidth="2" />
            </svg>
          </div>
          <div className="flex-1 bg-[#606060]" />
        </aside>
      </div>
    </div>
  );
}
